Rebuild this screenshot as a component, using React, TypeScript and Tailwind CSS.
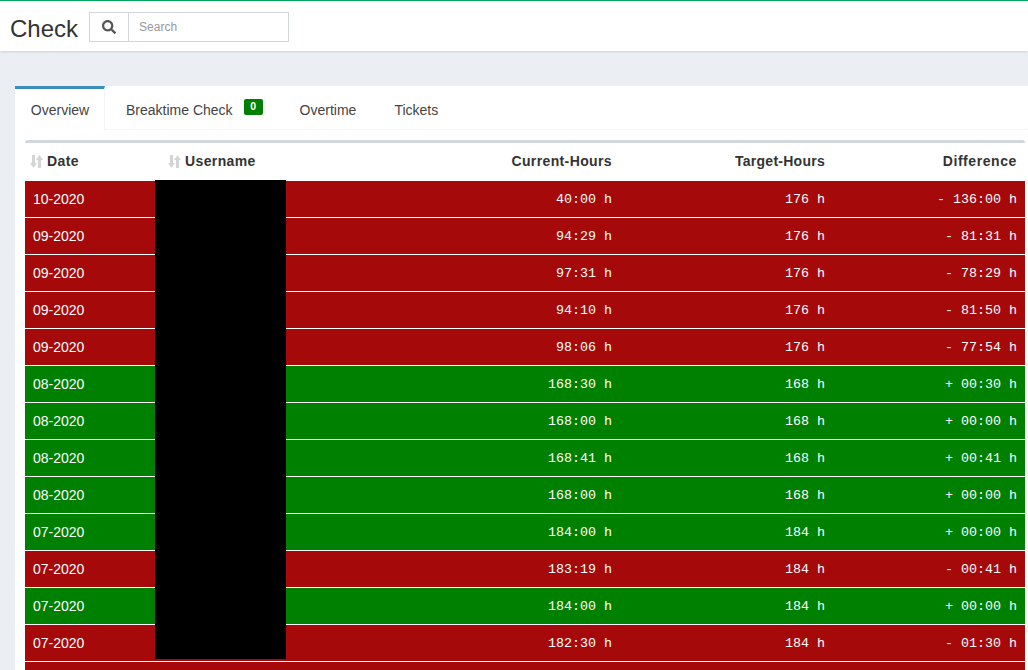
import { FaSearch } from 'react-icons/fa';

type Row = { date: string; current: string; target: string; diff: string; ok: boolean };

const ROWS: Row[] = [
  { date: '10-2020', current: '40:00 h', target: '176 h', diff: '- 136:00 h', ok: false },
  { date: '09-2020', current: '94:29 h', target: '176 h', diff: '- 81:31 h', ok: false },
  { date: '09-2020', current: '97:31 h', target: '176 h', diff: '- 78:29 h', ok: false },
  { date: '09-2020', current: '94:10 h', target: '176 h', diff: '- 81:50 h', ok: false },
  { date: '09-2020', current: '98:06 h', target: '176 h', diff: '- 77:54 h', ok: false },
  { date: '08-2020', current: '168:30 h', target: '168 h', diff: '+ 00:30 h', ok: true },
  { date: '08-2020', current: '168:00 h', target: '168 h', diff: '+ 00:00 h', ok: true },
  { date: '08-2020', current: '168:41 h', target: '168 h', diff: '+ 00:41 h', ok: true },
  { date: '08-2020', current: '168:00 h', target: '168 h', diff: '+ 00:00 h', ok: true },
  { date: '07-2020', current: '184:00 h', target: '184 h', diff: '+ 00:00 h', ok: true },
  { date: '07-2020', current: '183:19 h', target: '184 h', diff: '- 00:41 h', ok: false },
  { date: '07-2020', current: '184:00 h', target: '184 h', diff: '+ 00:00 h', ok: true },
  { date: '07-2020', current: '182:30 h', target: '184 h', diff: '- 01:30 h', ok: false },
  // only the top of this row is in view, its text is below the fold
  { date: '', current: '', target: '', diff: '', ok: false },
];

function SortIcon() {
  return (
    <svg width="13" height="13" viewBox="0 0 13 13" className="shrink-0 text-[#d5d5d5]" fill="currentColor">
      <path d="M2 0h3v8h2L3.5 13 0 8h2z" />
      <path d="M8 13h3V5h2L9.5 0 6 5h2z" />
    </svg>
  );
}

function Tab({ label, active, badge }: { label: string; active?: boolean; badge?: string }) {
  return (
    <div
      className={
        active
          ? 'h-[44px] w-[90px] -mb-px pl-[1px] pt-[2px] border-t-[3px] border-r border-t-[#3c8dbc] border-r-[#f4f4f4] bg-white flex items-center justify-center text-[14px] text-[#444]'
          : 'h-[44px] px-[21px] pt-[5px] flex items-center text-[14px] text-[#444]'
      }
    >
      {label}
      {badge && (
        <span className="ml-[11px] -mr-[5px] mb-[7px] h-[16px] w-[19px] rounded-[2px] bg-[#008000] text-white text-[10.5px] font-bold leading-[15px] text-center">
          {badge}
        </span>
      )}
    </div>
  );
}

export default function App() {
  return (
    <div className="h-[670px] w-[1028px] overflow-hidden bg-[#ebeef3] font-['Liberation_Sans',Arial,sans-serif] text-[#333]">
      <header className="h-[51px] border-t border-[#00a65a] shadow-[0_1px_2px_rgba(0,0,0,0.12)] bg-white flex items-center pl-[10px] pt-[3px]">
        <h1 className="text-[24px] leading-none text-[#333] mt-[3px]">Check</h1>
        <div className="ml-[11px] mb-[1px] flex h-[30px] w-[200px] border border-[#d2d6de]">
          <div className="w-[39px] border-r border-[#d2d6de] flex items-center justify-center text-[#555]">
            <FaSearch size={14} />
          </div>
          <div className="pl-[10px] flex items-center text-[12px] text-[#999]">Search</div>
        </div>
      </header>

      <main className="pl-[15px] pt-[35px]">
        <div className="bg-white h-[584px]">
          <nav className="flex h-[44px] border-b border-[#f4f4f4]">
            <Tab label="Overview" active />
            <Tab label="Breaktime Check" badge="0" />
            <Tab label="Overtime" />
            <div className="-ml-[4px]">
              <Tab label="Tickets" />
            </div>
          </nav>

          <div className="relative ml-[10px] mr-[3px] mt-[10px] border-t-[3px] border-[#d2d6de] rounded-t-[3px]">
            <table className="w-full table-fixed border-collapse text-[14px]">
              <colgroup>
                <col className="w-[130px]" />
                <col className="w-[130px]" />
                <col className="w-[335px]" />
                <col className="w-[213px]" />
                <col />
              </colgroup>
              <thead>
                <tr className="h-[37px] text-[#333] font-bold tracking-[0.38px]">
                  <th className="pl-[5px] text-left">
                    <span className="flex items-center gap-[4px]"><SortIcon />Date</span>
                  </th>
                  <th className="pl-[13px] text-left">
                    <span className="flex items-center gap-[4px]"><SortIcon />Username</span>
                  </th>
                  <th className="pr-[8px] text-right">Current-Hours</th>
                  <th className="pr-[8px] text-right tracking-[0.26px]">Target-Hours</th>
                  <th className="pr-[8px] text-right tracking-[0.58px]">Difference</th>
                </tr>
              </thead>
              <tbody>
                {ROWS.map((r, i) => (
                  <tr key={i} className={r.ok ? 'h-[37px] bg-[#008000] text-white border-t border-white' : 'h-[37px] bg-[#a50909] text-white border-t border-white'}>
                    <td className="px-[8px] pt-[2px]">{r.date}</td>
                    <td />
                    <td className="pr-[8px] pt-[2px] text-right font-['Liberation_Mono',monospace] text-[13.33px]">{r.current}</td>
                    <td className="pr-[8px] pt-[2px] text-right font-['Liberation_Mono',monospace] text-[13.33px]">{r.target}</td>
                    <td className="pr-[8px] pt-[2px] text-right font-['Liberation_Mono',monospace] text-[13.33px]">{r.diff}</td>
                  </tr>
                ))}
              </tbody>
            </table>
            {/* redacted usernames */}
            <div className="absolute left-[130px] top-[37px] h-[479px] w-[131px] bg-black" />
          </div>
        </div>
      </main>
    </div>
  );
}
